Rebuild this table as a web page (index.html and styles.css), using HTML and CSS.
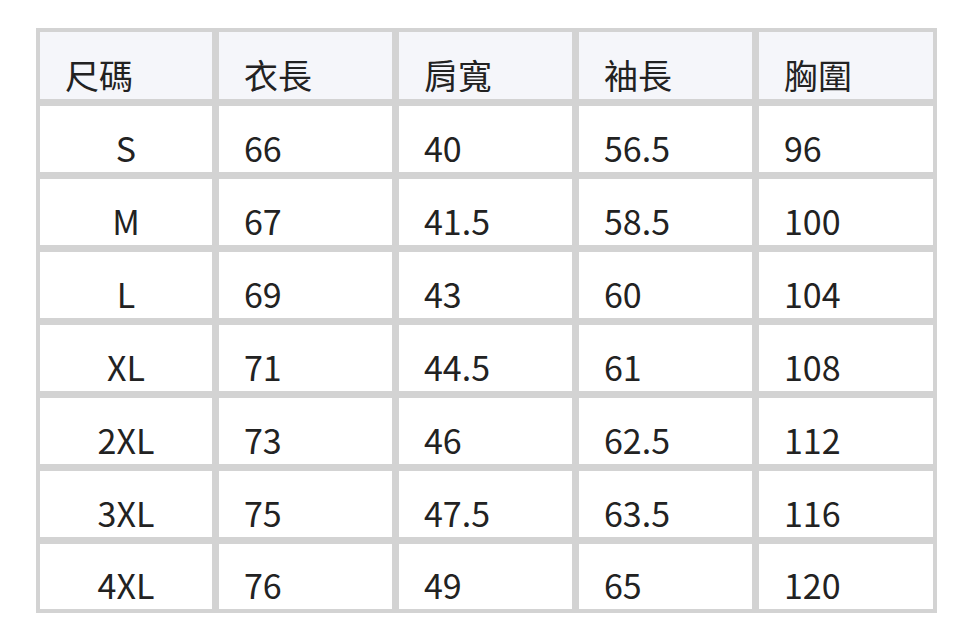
FILE: index.html
```html
<!DOCTYPE html>
<html lang="zh-Hant">
<head>
<meta charset="utf-8">
<title>尺碼表</title>
<link rel="stylesheet" href="styles.css">
</head>
<body>
<div class="size-table">
  <div class="cell head">尺碼</div>
  <div class="cell head">衣長</div>
  <div class="cell head">肩寬</div>
  <div class="cell head">袖長</div>
  <div class="cell head">胸圍</div>

  <div class="cell size">S</div><div class="cell">66</div><div class="cell">40</div><div class="cell">56.5</div><div class="cell">96</div>
  <div class="cell size">M</div><div class="cell">67</div><div class="cell">41.5</div><div class="cell">58.5</div><div class="cell">100</div>
  <div class="cell size">L</div><div class="cell">69</div><div class="cell">43</div><div class="cell">60</div><div class="cell">104</div>
  <div class="cell size">XL</div><div class="cell">71</div><div class="cell">44.5</div><div class="cell">61</div><div class="cell">108</div>
  <div class="cell size">2XL</div><div class="cell">73</div><div class="cell">46</div><div class="cell">62.5</div><div class="cell">112</div>
  <div class="cell size">3XL</div><div class="cell">75</div><div class="cell">47.5</div><div class="cell">63.5</div><div class="cell">116</div>
  <div class="cell size">4XL</div><div class="cell">76</div><div class="cell">49</div><div class="cell">65</div><div class="cell">120</div>
</div>
</body>
</html>
```
FILE: styles.css
```css
html, body {
  margin: 0;
  padding: 0;
  background: #ffffff;
}

body {
  padding: 28px 0 0 36px;
  font-family: "Noto Sans CJK TC", "Noto Sans", sans-serif;
  color: #222222;
}

.size-table {
  display: grid;
  grid-template-columns: 172px 173px 173px 173px 174px;
  grid-template-rows: 67px repeat(6, 66px) 65px;
  gap: 7px;
  padding: 4px;
  width: max-content;
  background: #d3d3d3;
}

.cell {
  display: flex;
  align-items: flex-end;
  padding-left: 25px;
  background: #ffffff;
  font-size: 34px;
  line-height: normal;
  white-space: nowrap;
  overflow: hidden;
}

.cell.head {
  background: #f5f6fa;
}

.cell.size {
  justify-content: center;
  padding-left: 0;
}
```
